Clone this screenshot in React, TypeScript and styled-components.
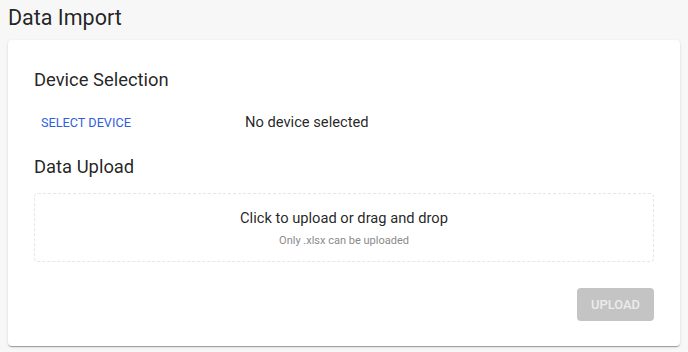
import styled, {createGlobalStyle} from 'styled-components';

const GlobalStyle = createGlobalStyle`
   body {
      margin: 0;
      background: #f7f7f7;
      font-family: Roboto, 'Liberation Sans', sans-serif;
      color: rgba(0, 0, 0, 0.87);
   }
`;

const Page = styled.div`
   padding: 2px 8px 8px;
`;

const Title = styled.h1`
   margin: 0;
   font-size: 21.5px;
   font-weight: 400;
   line-height: 32px;
`;

const Card = styled.section`
   margin-top: 6px;
   padding: 23px 26px 25px;
   background: #fff;
   border-radius: 4px;
   box-shadow: 0 2px 1px -1px rgba(0, 0, 0, 0.2),
      0 1px 1px 0 rgba(0, 0, 0, 0.14), 0 1px 3px 0 rgba(0, 0, 0, 0.12);
`;

const SectionTitle = styled.h2<{$gap?: number}>`
   margin: ${props => props.$gap ?? 0}px 0 0;
   font-size: 18.4px;
   font-weight: 400;
   line-height: 33px;
`;

const DeviceRow = styled.div`
   display: grid;
   grid-template-columns: 211px 1fr;
   align-items: center;
   margin-top: 8px;
`;

const TextButton = styled.button`
   justify-self: start;
   height: 36px;
   padding: 6px 7px;
   border: none;
   border-radius: 4px;
   background: transparent;
   color: #2f5fdf;
   font-family: inherit;
   font-size: 12.7px;
   font-weight: 400;
   text-transform: uppercase;
   cursor: pointer;
`;

const Status = styled.span`
   font-size: 14.7px;
`;

const DropZone = styled.div`
   margin-top: 10px;
   padding: 13px 16px 12px;
   border: 1px dashed #e6e6e6;
   border-radius: 4px;
   text-align: center;
   cursor: pointer;
`;

const DropText = styled.div`
   font-size: 14.7px;
   line-height: 22px;
`;

const DropHint = styled.div`
   margin-top: 4px;
   font-size: 11px;
   line-height: 16px;
   color: #8a8a8a;
`;

const Actions = styled.div`
   display: flex;
   justify-content: flex-end;
   margin-top: 26px;
`;

const UploadButton = styled.button`
   height: 33px;
   padding: 0 14px;
   border: none;
   border-radius: 4px;
   background: #c4c4c4;
   color: #ececec;
   font-family: inherit;
   font-size: 12.9px;
   font-weight: 500;
   text-transform: uppercase;
`;

const App = () => {
   return (
      <Page>
         <GlobalStyle />
         <Title>Data Import</Title>
         <Card>
            <SectionTitle>Device Selection</SectionTitle>
            <DeviceRow>
               <TextButton type='button'>Select Device</TextButton>
               <Status>No device selected</Status>
            </DeviceRow>
            <SectionTitle $gap={10}>Data Upload</SectionTitle>
            <DropZone>
               <DropText>Click to upload or drag and drop</DropText>
               <DropHint>Only .xlsx can be uploaded</DropHint>
            </DropZone>
            <Actions>
               <UploadButton type='button' disabled>
                  Upload
               </UploadButton>
            </Actions>
         </Card>
      </Page>
   );
};

export default App;
